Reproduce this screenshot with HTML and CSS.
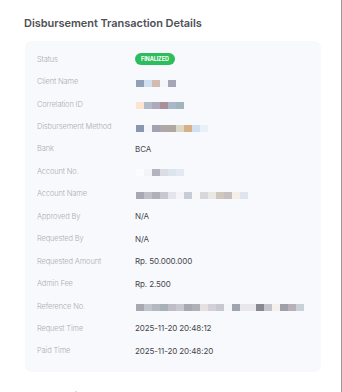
FILE: index.html
```html
<!DOCTYPE html>
<html lang="en">
<head>
    <meta charset="UTF-8">
    <meta name="viewport" content="width=device-width, initial-scale=1.0">
    <title>Disbursement Transaction Details</title>
    <link rel="stylesheet" href="styles.css">
</head>
<body>
    <div class="page">
        <h2 class="section-title">Disbursement Transaction Details</h2>
        <div class="detail-card">
            <div class="row">
                <span class="label">Status</span>
                <span class="value"><span class="badge">FINALIZED</span></span>
            </div>
            <div class="row">
                <span class="label">Client Name</span>
                <span class="value blur">
                    <i style="background:#8fa0b8"></i><i style="background:#cfe0f0"></i><i style="background:#d4bab0"></i><i style="background:#f4f5fa"></i><i style="background:#a8a4b8"></i>
                </span>
            </div>
            <div class="row">
                <span class="label">Correlation ID</span>
                <span class="value blur">
                    <i style="background:#fbe5d0"></i><i style="background:#b0bcc8"></i><i style="background:#b0a8bc"></i><i style="background:#a89098"></i><i style="background:#a8b8c8"></i><i style="background:#a0b4bc"></i>
                </span>
            </div>
            <div class="row">
                <span class="label">Disbursement Method</span>
                <span class="value blur">
                    <i style="background:#8898b0"></i><i style="background:#f4f6fa"></i><i style="background:#a0a4b0"></i><i style="background:#b0a8a8"></i><i style="background:#b0a8a0"></i><i style="background:#dcd8c8"></i><i style="background:#d8b088"></i><i style="background:#d0e0f0"></i><i style="background:#e8f0f8"></i>
                </span>
            </div>
            <div class="row">
                <span class="label">Bank</span>
                <span class="value">BCA</span>
            </div>
            <div class="row">
                <span class="label">Account No.</span>
                <span class="value blur">
                    <i style="background:#fbfcff"></i><i style="background:#f4f4f8"></i><i style="background:#b4b4c0"></i><i style="background:#dcdce4"></i><i style="background:#dce4ee"></i><i style="background:#e4e8f0"></i>
                </span>
            </div>
            <div class="row">
                <span class="label">Account Name</span>
                <span class="value blur">
                    <i style="background:#a8a8b4"></i><i style="background:#c0c0c8"></i><i style="background:#b0b0b8"></i><i style="background:#c8c8d0"></i><i style="background:#e4e4ec"></i><i style="background:#f4f4f8"></i><i style="background:#c8ccd8"></i><i style="background:#f8f8f8"></i><i style="background:#d8d8dc"></i><i style="background:#e8e8e4"></i><i style="background:#d0c8bc"></i><i style="background:#c8c0c0"></i><i style="background:#f4f0e8"></i><i style="background:#e0e4ec"></i>
                </span>
            </div>
            <div class="row">
                <span class="label">Approved By</span>
                <span class="value">N/A</span>
            </div>
            <div class="row">
                <span class="label">Requested By</span>
                <span class="value">N/A</span>
            </div>
            <div class="row">
                <span class="label">Requested Amount</span>
                <span class="value">Rp. 50.000.000</span>
            </div>
            <div class="row">
                <span class="label">Admin Fee</span>
                <span class="value">Rp. 2.500</span>
            </div>
            <div class="row">
                <span class="label">Reference No.</span>
                <span class="value blur">
                    <i style="background:#a8a8b0"></i><i style="background:#c0c4cc"></i><i style="background:#b4b8c0"></i><i style="background:#a8b0b8"></i><i style="background:#c0bcc8"></i><i style="background:#c8c8d0"></i><i style="background:#a8a8b0"></i><i style="background:#b0b0b8"></i><i style="background:#e8e0e0"></i><i style="background:#d4d0d8"></i><i style="background:#c8c8d0"></i><i style="background:#f4f6fa"></i><i style="background:#a0a4ac"></i><i style="background:#e8e8ec"></i><i style="background:#e8e8ec"></i><i style="background:#888890"></i><i style="background:#c4c4cc"></i><i style="background:#f4f0ec"></i><i style="background:#a0a0a8"></i><i style="background:#b8b0b8"></i><i style="background:#c8d0d8"></i>
                </span>
            </div>
            <div class="row">
                <span class="label">Request Time</span>
                <span class="value">2025-11-20 20:48:12</span>
            </div>
            <div class="row">
                <span class="label">Paid Time</span>
                <span class="value">2025-11-20 20:48:20</span>
            </div>
        </div>
        <h2 class="section-title next">Item Details</h2>
    </div>
</body>
</html>
```

FILE: styles.css
```css
html, body {
    margin: 0;
    padding: 0;
    background: #fff;
    overflow: hidden;
}
body {
    font-family: Inter, "Noto Sans", sans-serif;
    color: #444;
}
.page {
    height: 392px;
    box-sizing: border-box;
    padding: 17px 20px 0 25px;
    border-right: 1px solid #9a9a9a;
}
.section-title {
    margin: 0 0 11px -1px;
    font-size: 11px;
    font-weight: 600;
    line-height: 13px;
    color: #505056;
    letter-spacing: -0.05px;
}
.section-title.next {
    margin-top: 18px;
    color: #8a8a90;
}
.detail-card {
    background: #f8f9fd;
    border-radius: 7px;
    padding: 7px 12px 10px 12px;
}
.row {
    display: flex;
    align-items: center;
    height: 22.45px;
}
.label {
    width: 98px;
    flex-shrink: 0;
    font-size: 7.5px;
    font-weight: 300;
    color: #acacb4;
    letter-spacing: -0.15px;
}
.value {
    font-size: 8px;
    color: #45454b;
    letter-spacing: -0.1px;
    display: flex;
    align-items: center;
}
.blur {
    margin-left: 1px;
    margin-top: 3px;
}
.blur i {
    display: block;
    width: 8px;
    height: 7px;
}
.badge {
    display: inline-block;
    background: #2dbd5c;
    color: #fff;
    font-size: 5.5px;
    font-weight: 700;
    line-height: 7px;
    padding: 2.5px 6px;
    border-radius: 7px;
    letter-spacing: -0.1px;
}
```
